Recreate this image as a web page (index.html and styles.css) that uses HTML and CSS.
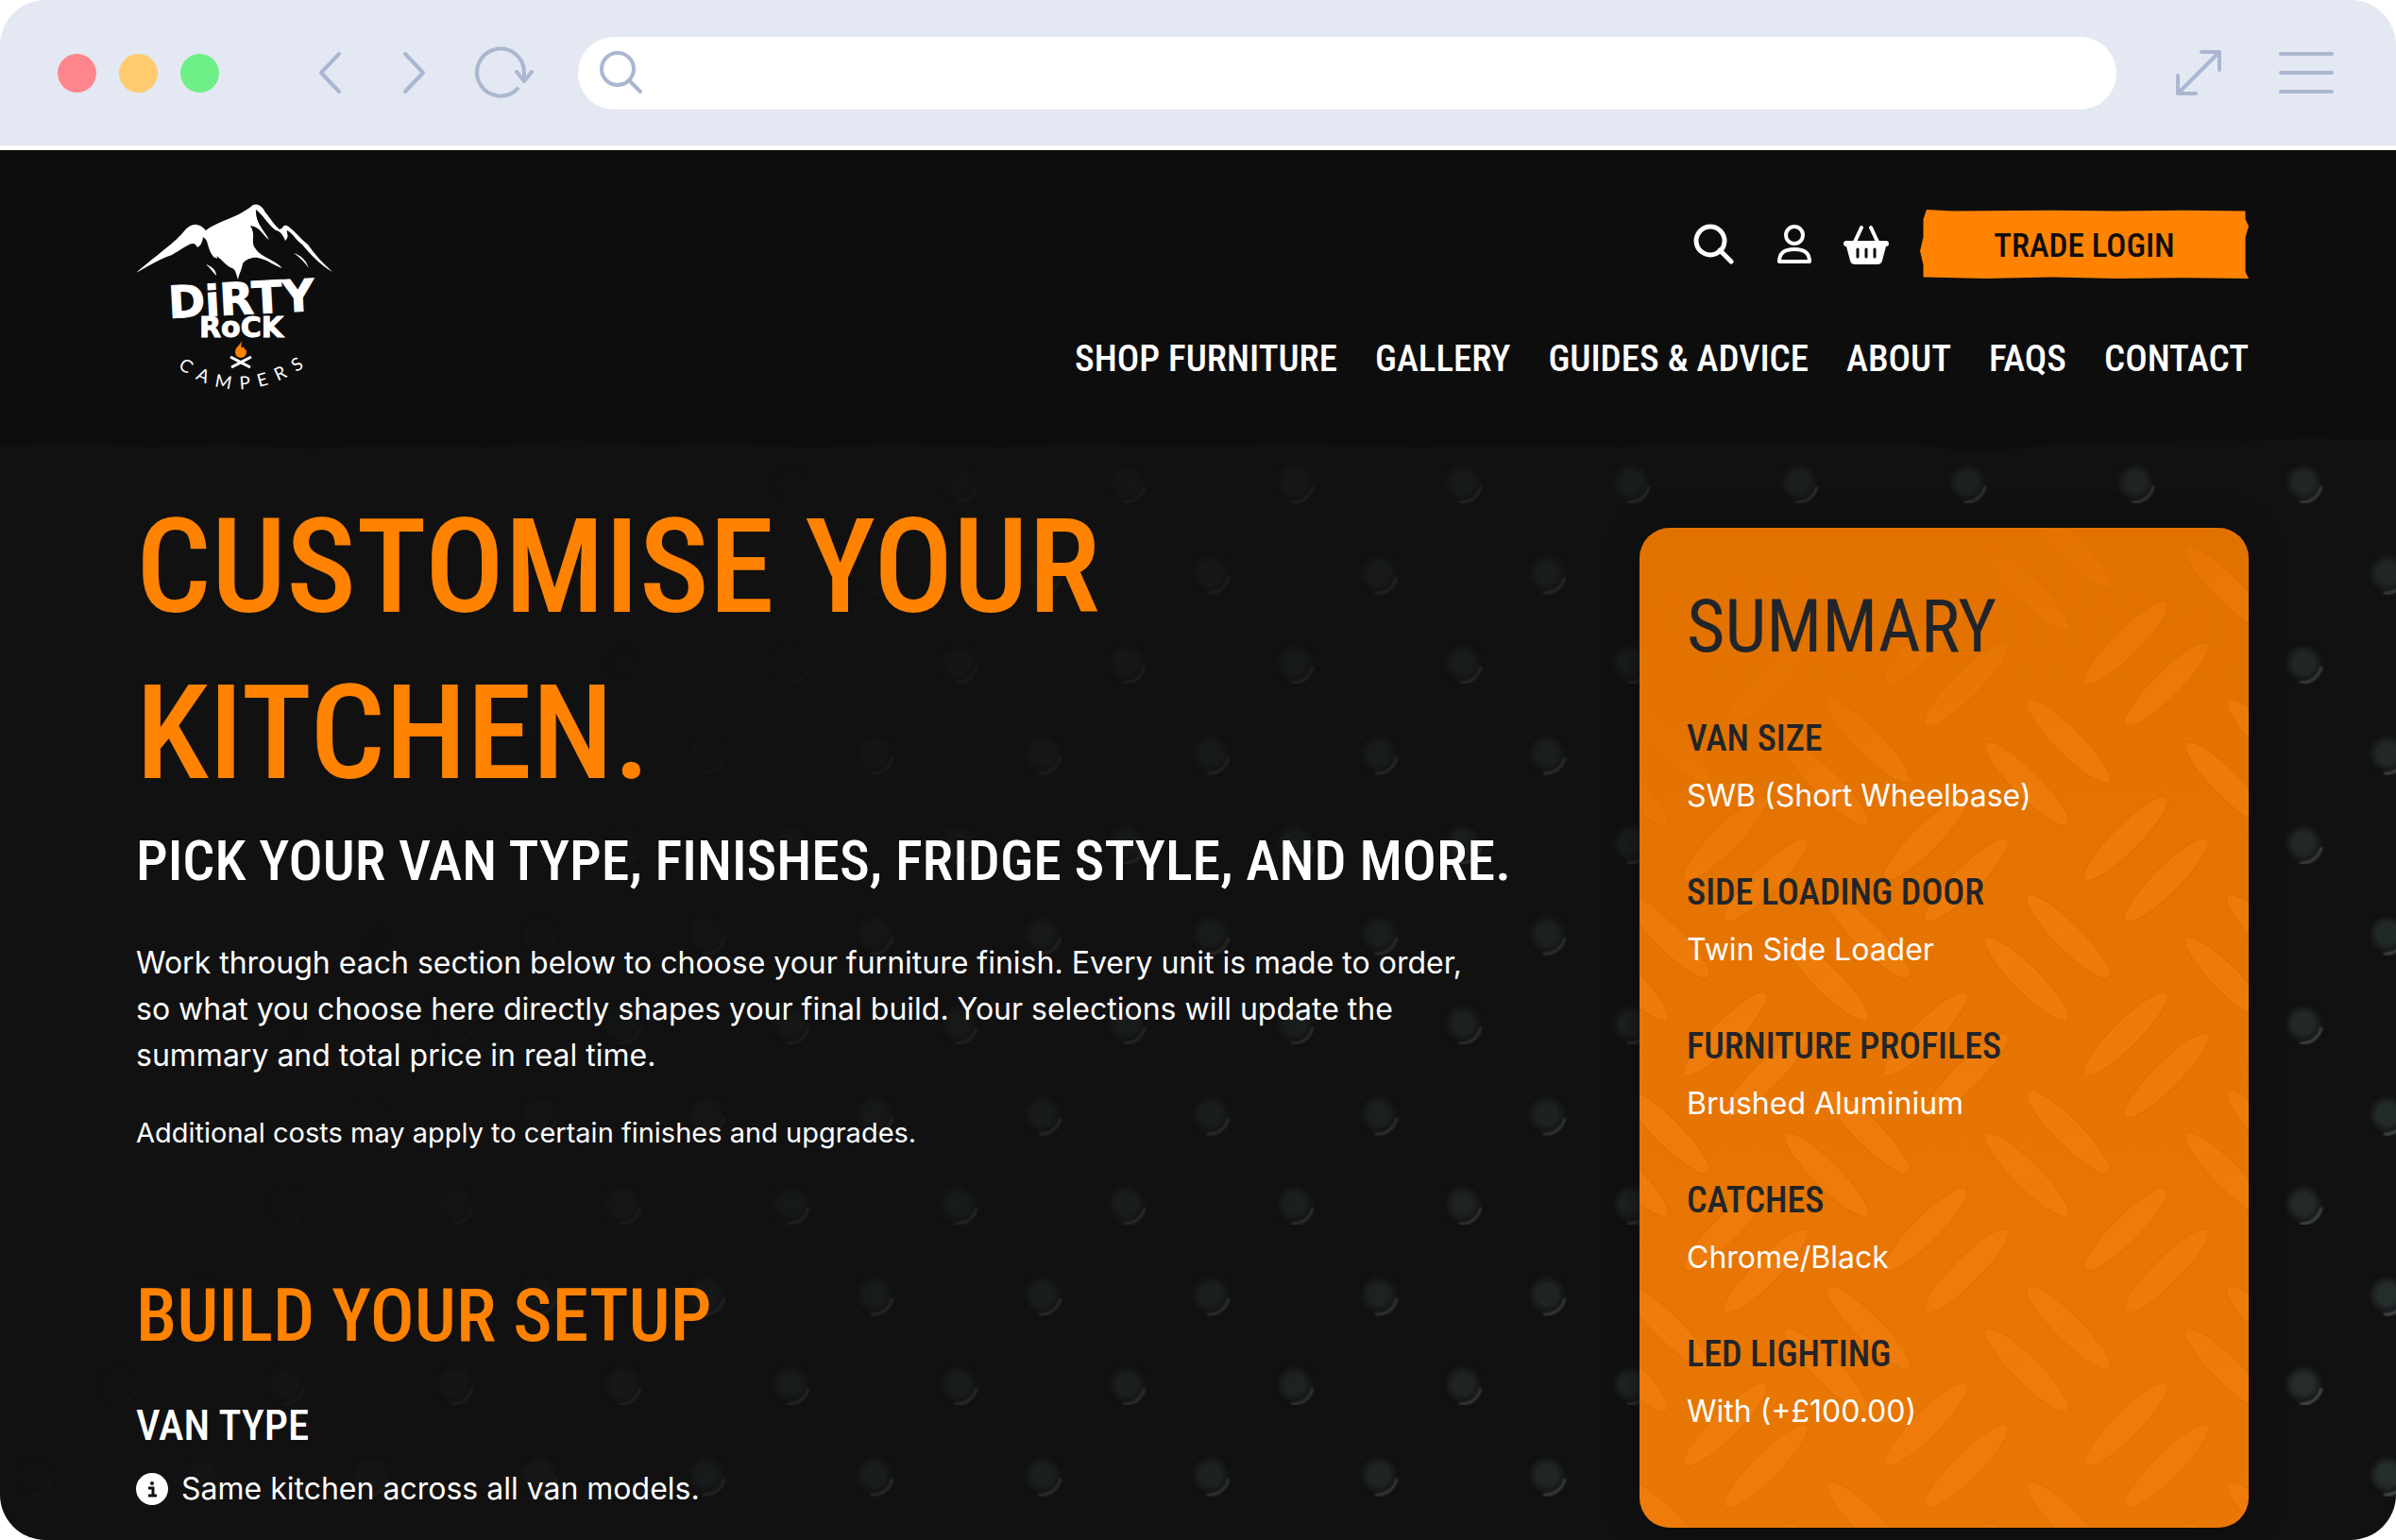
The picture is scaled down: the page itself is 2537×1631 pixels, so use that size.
FILE: index.html
```html
<!DOCTYPE html>
<html lang="en">
<head>
    <meta charset="UTF-8">
    <meta name="viewport" content="width=device-width, initial-scale=1.0">
    <title>Customise your kitchen | Dirty Rock Campers</title>
    <link rel="stylesheet" href="styles.css">
</head>
<body>
    <div class="window">
        <div class="browser-bar">
            <div class="dots">
                <span class="dot dot-red"></span>
                <span class="dot dot-yellow"></span>
                <span class="dot dot-green"></span>
            </div>
            <div class="browser-nav">
                <button class="icon-btn" aria-label="Back">
                    <svg width="26" height="48" viewBox="0 0 26 48"><path d="M23 4 4 24 23 44"/></svg>
                </button>
                <button class="icon-btn" aria-label="Forward">
                    <svg width="26" height="48" viewBox="0 0 26 48"><path d="M3 4 22 24 3 44"/></svg>
                </button>
                <button class="icon-btn" aria-label="Reload">
                    <svg width="64" height="56" viewBox="0 0 64 56"><path d="M46 45A25 25 0 1 1 53 28V37M45 27 53 37 61 27"/></svg>
                </button>
            </div>
            <label class="address">
                <svg width="48" height="48" viewBox="0 0 48 48"><circle cx="20" cy="20" r="17"/><path d="M32 32 44 44"/></svg>
                <input type="text" aria-label="Address">
            </label>
            <div class="browser-tools">
                <button class="icon-btn" aria-label="Full screen">
                    <svg width="52" height="52" viewBox="0 0 52 52"><path d="M3 48 47 4M28 4H47V23M3 29V48H22"/></svg>
                </button>
                <button class="icon-btn" aria-label="Menu">
                    <svg width="60" height="48" viewBox="0 0 60 48"><path d="M2 4H56M2 24H56M2 44H56"/></svg>
                </button>
            </div>
        </div>

        <div class="site">
            <!-- rubber floor studs, fading in towards the bottom right -->
            <svg class="studs" aria-hidden="true">
                <defs>
                    <filter id="soft"><feGaussianBlur stdDeviation="3"/></filter>
                    <filter id="softEdge"><feGaussianBlur stdDeviation="1"/></filter>
                    <pattern id="studPattern" width="178" height="191" patternUnits="userSpaceOnUse" patternTransform="translate(-8 -8)">
                        <g id="stud">
                            <circle cx="44" cy="74" r="16" fill="#282d2f" filter="url(#soft)"/>
                            <path d="M63 78A21 21 0 0 1 40 95" fill="none" stroke="#4c5052" stroke-width="3" filter="url(#softEdge)"/>
                        </g>
                        <use href="#stud" x="89" y="95"/>
                    </pattern>
                    <linearGradient id="fade" gradientUnits="userSpaceOnUse" x1="900" y1="200" x2="2500" y2="1500">
                        <stop offset="0" stop-color="#000"/>
                        <stop offset="0.25" stop-color="#444"/>
                        <stop offset="0.65" stop-color="#bbb"/>
                        <stop offset="1" stop-color="#fff"/>
                    </linearGradient>
                    <mask id="studMask"><rect width="100%" height="100%" fill="url(#fade)"/></mask>
                </defs>
                <rect width="100%" height="100%" fill="url(#studPattern)" mask="url(#studMask)"/>
            </svg>

            <header class="header">
                <a class="logo" href="#" aria-label="Dirty Rock Campers">
                    <svg width="210" height="200" viewBox="0 0 210 200">
                        <path fill="#fff" d="M0 73C18 57 40 42 50 30C58 20 66 19 74 28C86 18 108 15 124 1C130-1 134 3 137 9C143 16 147 23 152 27C158 25 154 22 160 23C168 28 174 37 182 43C189 53 198 63 208 72C196 65 184 53 176 43C170 39 166 31 160 28C159 31 163 34 158 39C156 33 152 28 148 28C140 22 134 11 127 6C126 20 136 28 141 38C134 33 131 24 121 23C128 34 120 40 127 48C132 56 145 58 155 68C145 65 140 59 129 57C124 56 117 58 113 63C112 70 109 74 108 80C106 75 106 70 102 68C95 66 89 56 83 54C81 49 76 38 71 35C70 40 70 43 65 46C63 43 63 42 60 42C56 42 45 50 38 54C23 59 11 67 0 73Z"/>
                        <path fill="#fff" d="M72 30C84 34 84 45 86 58L82 56C76 48 76 40 72 30ZM167 52C176 55 180 60 183 68C179 62 174 57 167 52ZM74 64C80 66 85 70 85 76C81 72 79 68 74 64Z"/>
                        <g class="logo-words">
                            <text x="34" y="117" font-size="47" transform="rotate(-3 110 100)">D<tspan font-size="45">i</tspan>RTY</text>
                            <text x="67" y="141" font-size="30">RoCK</text>
                        </g>
                        <path fill="#ff8201" d="M112 145C109 151 105 152 105 157A6 6 0 0 0 117 157C117 153 114 154 114 151C111 155 111 149 112 145Z"/>
                        <path stroke="#fff" stroke-width="3" d="M100 162 121 173M122 162 101 173"/>
                        <path id="arc" fill="none" d="M44 173Q110 223 188 166"/>
                        <text class="logo-arc"><textPath href="#arc">C&nbsp; A&nbsp; M&nbsp; P&nbsp; E&nbsp; R&nbsp; S</textPath></text>
                    </svg>
                </a>
                <div class="header-right">
                    <div class="header-tools">
                        <button class="icon-btn" aria-label="Search">
                            <svg width="44" height="44" viewBox="0 0 44 44"><path fill="none" stroke="#fff" stroke-width="5" stroke-linecap="round" d="M28 28 40 40M33 18A15 15 0 1 1 3 18A15 15 0 1 1 33 18"/></svg>
                        </button>
                        <a class="account" href="#" aria-label="Account">
                            <svg width="38" height="44" viewBox="0 0 38 44"><g fill="none" stroke="#fff" stroke-width="4"><circle cx="19" cy="12" r="9"/><path stroke-linejoin="round" d="M3 40C3 31 8 27 19 27S35 31 35 40Z"/></g></svg>
                        </a>
                        <a class="basket" href="#" aria-label="Basket">
                            <svg width="48" height="44" viewBox="0 0 48 44"><path fill="#fff" d="M3 18H45Q48 18 48 21T45 24L41 39Q40 43 36 43H12Q8 43 7 39L3 24Q0 24 0 21T3 18Z"/><path fill="none" stroke="#fff" stroke-width="4" stroke-linecap="round" d="M12 19 19 4M36 19 29 4"/><path stroke="#0d0d0d" stroke-width="3" stroke-linecap="round" d="M15 27V35M24 27V35M33 27V35"/></svg>
                        </a>
                        <button class="trade-btn">Trade login</button>
                    </div>
                    <nav class="main-nav">
                        <a href="#">Shop furniture</a>
                        <a href="#">Gallery</a>
                        <a href="#">Guides &amp; advice</a>
                        <a href="#">About</a>
                        <a href="#">FAQs</a>
                        <a href="#">Contact</a>
                    </nav>
                </div>
                <svg class="header-edge" viewBox="0 0 2537 20" preserveAspectRatio="none" aria-hidden="true">
                    <path fill="#0d0d0d" d="M0 0H2537V2L2480 2L2440 1L2380 4L2310 3L2280 8L2240 4L2200 8L2180 5L2150 11L2110 14L2060 12L2020 6L1960 7L1900 4L1800 6L1760 4L1720 10L1650 9L1500 10L1420 8L1350 7L1300 10L1220 10L1160 6L1060 10L940 7L860 11L760 6L700 9L600 3L520 10L400 8L330 12L240 7L160 10L80 6L0 9Z"/>
                </svg>
            </header>

            <main class="content">
                <section class="intro">
                    <h1>Customise your<br>kitchen.</h1>
                    <h2 class="lead">Pick your van type, finishes, fridge style, and more.</h2>
                    <p class="text">Work through each section below to choose your furniture finish. Every unit is made to order,<br>so what you choose here directly shapes your final build. Your selections will update the<br>summary and total price in real time.</p>
                    <p class="small">Additional costs may apply to certain finishes and upgrades.</p>
                    <h2 class="setup">Build your setup</h2>
                    <h3>Van type</h3>
                    <p class="info">
                        <svg width="34" height="34" viewBox="0 0 34 34"><circle cx="17" cy="17" r="17" fill="#fff"/><circle cx="17" cy="11" r="2" fill="#111"/><path fill="none" stroke="#111" stroke-width="3" d="M13 16H18V24M13 24H22"/></svg>
                        Same kitchen across all van models.
                    </p>
                </section>

                <aside class="summary">
                    <!-- checker plate texture -->
                    <svg class="plate" aria-hidden="true">
                        <defs>
                            <pattern id="platePattern" width="212" height="207" patternUnits="userSpaceOnUse" patternTransform="translate(155 182)">
                                <g id="treads" fill="#ff8c1e" stroke="#a04c00" stroke-opacity="0.5">
                                    <ellipse rx="61" ry="14" transform="translate(87 44) rotate(45)"/>
                                    <ellipse rx="61" ry="14" transform="translate(43 89) rotate(45)"/>
                                    <ellipse rx="61" ry="14" transform="translate(148 147) rotate(-45)"/>
                                    <ellipse rx="61" ry="14" transform="translate(191 191) rotate(-45)"/>
                                </g>
                                <use href="#treads" x="-212"/>
                                <use href="#treads" y="-207"/>
                                <use href="#treads" x="-212" y="-207"/>
                            </pattern>
                            <linearGradient id="plateFade" x1="0" y1="0" x2="0.3" y2="1">
                                <stop offset="0.15" stop-color="#000"/>
                                <stop offset="0.35" stop-color="#444"/>
                                <stop offset="0.5" stop-color="#555"/>
                                <stop offset="1" stop-color="#444"/>
                            </linearGradient>
                            <mask id="plateMask"><rect width="100%" height="100%" fill="url(#plateFade)"/></mask>
                        </defs>
                        <rect width="100%" height="100%" fill="url(#platePattern)" mask="url(#plateMask)"/>
                    </svg>
                    <h2>Summary</h2>
                    <dl>
                        <dt>Van size</dt>
                        <dd>SWB (Short Wheelbase)</dd>
                        <dt>Side loading door</dt>
                        <dd>Twin Side Loader</dd>
                        <dt>Furniture profiles</dt>
                        <dd>Brushed Aluminium</dd>
                        <dt>Catches</dt>
                        <dd>Chrome/Black</dd>
                        <dt>LED lighting</dt>
                        <dd>With (+£100.00)</dd>
                    </dl>
                </aside>
            </main>
        </div>
    </div>
</body>
</html>
```
FILE: styles.css
```css
* {
    box-sizing: border-box;
}
body {
    margin: 0;
    background: #fff;
    color: #fff;
    font-family: Inter, "Liberation Sans", sans-serif;
}
h1, h2, h3, p, dl, dt, dd {
    margin: 0;
}
h1, h2, h3, dt, .main-nav, .trade-btn {
    font-family: "Roboto Condensed", "Liberation Sans Narrow", Roboto, sans-serif;
    font-weight: 500;
    text-transform: uppercase;
}
a {
    color: #fff;
    text-decoration: none;
}
svg {
    display: block;
}
.window {
    display: flex;
    flex-direction: column;
    min-height: 100vh;
    border-radius: 48px;
    overflow: hidden;
}

/* browser bar */
.browser-bar {
    display: flex;
    align-items: center;
    height: 159px;
    padding: 0 64px 0 61px;
    background: #e3e8f3;
    border-bottom: 5px solid #fff;
}
.browser-bar svg {
    fill: none;
    stroke: #abb7d0;
    stroke-width: 4;
    stroke-linecap: round;
    stroke-linejoin: round;
}
.icon-btn {
    padding: 0;
    border: none;
    background: none;
    cursor: pointer;
}
.dots {
    display: flex;
    gap: 24px;
}
.dot {
    width: 41px;
    height: 41px;
    border-radius: 50%;
}
.dot-red {
    background: #ff858d;
}
.dot-yellow {
    background: #ffcb6e;
}
.dot-green {
    background: #6eef87;
}
.browser-nav {
    display: flex;
    align-items: center;
    gap: 64px;
    margin: 0 46px 0 104px;
}
.browser-nav .icon-btn:last-child {
    margin-left: -14px;
}
.address {
    display: flex;
    align-items: center;
    flex: 1;
    height: 77px;
    padding: 0 22px;
    border-radius: 39px;
    background: #fff;
}
.address input {
    flex: 1;
    border: none;
    outline: none;
    background: none;
    font-size: 32px;
}
.browser-tools {
    display: flex;
    align-items: center;
    gap: 58px;
    margin-left: 62px;
}

/* site */
.site {
    position: relative;
    flex: 1;
    background: #111;
}
.studs {
    position: absolute;
    inset: 0;
    width: 100%;
    height: 100%;
}
.header {
    position: relative;
    display: flex;
    justify-content: space-between;
    height: 304px;
    padding: 57px 156px 0 144px;
    background: #0d0d0d;
}
.header-edge {
    position: absolute;
    left: 0;
    top: 100%;
    width: 100%;
    height: 20px;
}
.logo-words {
    fill: #fff;
    stroke: #fff;
    stroke-width: 1;
    font-family: "DejaVu Sans", sans-serif;
    font-weight: bold;
}
.logo-arc {
    fill: #fff;
    font-family: Lato, sans-serif;
    font-size: 19px;
}
.header-right {
    display: flex;
    flex-direction: column;
    align-items: flex-end;
    gap: 57px;
    padding-top: 6px;
}
.header-tools {
    display: flex;
    align-items: center;
}
.account {
    margin-left: 44px;
}
.basket {
    margin: 0 33px;
}
.trade-btn {
    width: 348px;
    height: 73px;
    padding: 4px 0 0;
    border: none;
    background: #ff8201;
    color: #0d0d0d;
    font-size: 35px;
    cursor: pointer;
    clip-path: polygon(2% 0, 10% 2%, 40% 1%, 60% 2%, 80% 1%, 99% 2%, 99% 14%, 100% 24%, 99% 40%, 99% 60%, 99% 76%, 99% 90%, 100% 100%, 80% 99%, 60% 100%, 40% 98%, 20% 100%, 1% 98%, 1% 80%, 0 60%, 1% 40%, 1% 30%, 1% 14%);
}
.main-nav {
    display: flex;
    gap: 40px;
    font-size: 39px;
    line-height: 56px;
}
.content {
    position: relative;
    display: flex;
    justify-content: space-between;
    align-items: flex-start;
    gap: 40px;
    padding: 49px 156px 12px 144px;
}
h1 {
    color: #ff8201;
    font-size: 140px;
    line-height: 176px;
}
.lead {
    margin-top: 8px;
    font-size: 60px;
    line-height: 80px;
}
.text {
    margin-top: 43px;
    font-size: 32px;
    line-height: 49px;
}
.small {
    margin-top: 38px;
    font-size: 29px;
    line-height: 40px;
}
.setup {
    margin-top: 126px;
    color: #ff8201;
    font-size: 78px;
    line-height: 96px;
}
h3 {
    margin-top: 40px;
    font-size: 45px;
    line-height: 56px;
}
.info {
    display: flex;
    align-items: center;
    gap: 14px;
    margin-top: 14px;
    font-size: 32px;
    line-height: 49px;
}

/* summary card */
.summary {
    position: relative;
    flex: none;
    width: 645px;
    margin-top: 47px;
    padding: 60px 50px 95px;
    border-radius: 32px;
    overflow: hidden;
    background: linear-gradient(#e27200, #e97704);
    box-shadow: 0 0 32px #0d0d0d;
}
.plate {
    position: absolute;
    inset: 0;
    width: 100%;
    height: 100%;
}
.summary h2,
.summary dl {
    position: relative;
}
.summary h2 {
    color: #212529;
    font-size: 78px;
    font-weight: 400;
    line-height: 89px;
}
.summary dt {
    margin-top: 43px;
    color: #212529;
    font-size: 38px;
    line-height: 63px;
}
.summary dd {
    font-size: 32px;
    line-height: 57px;
}
```
